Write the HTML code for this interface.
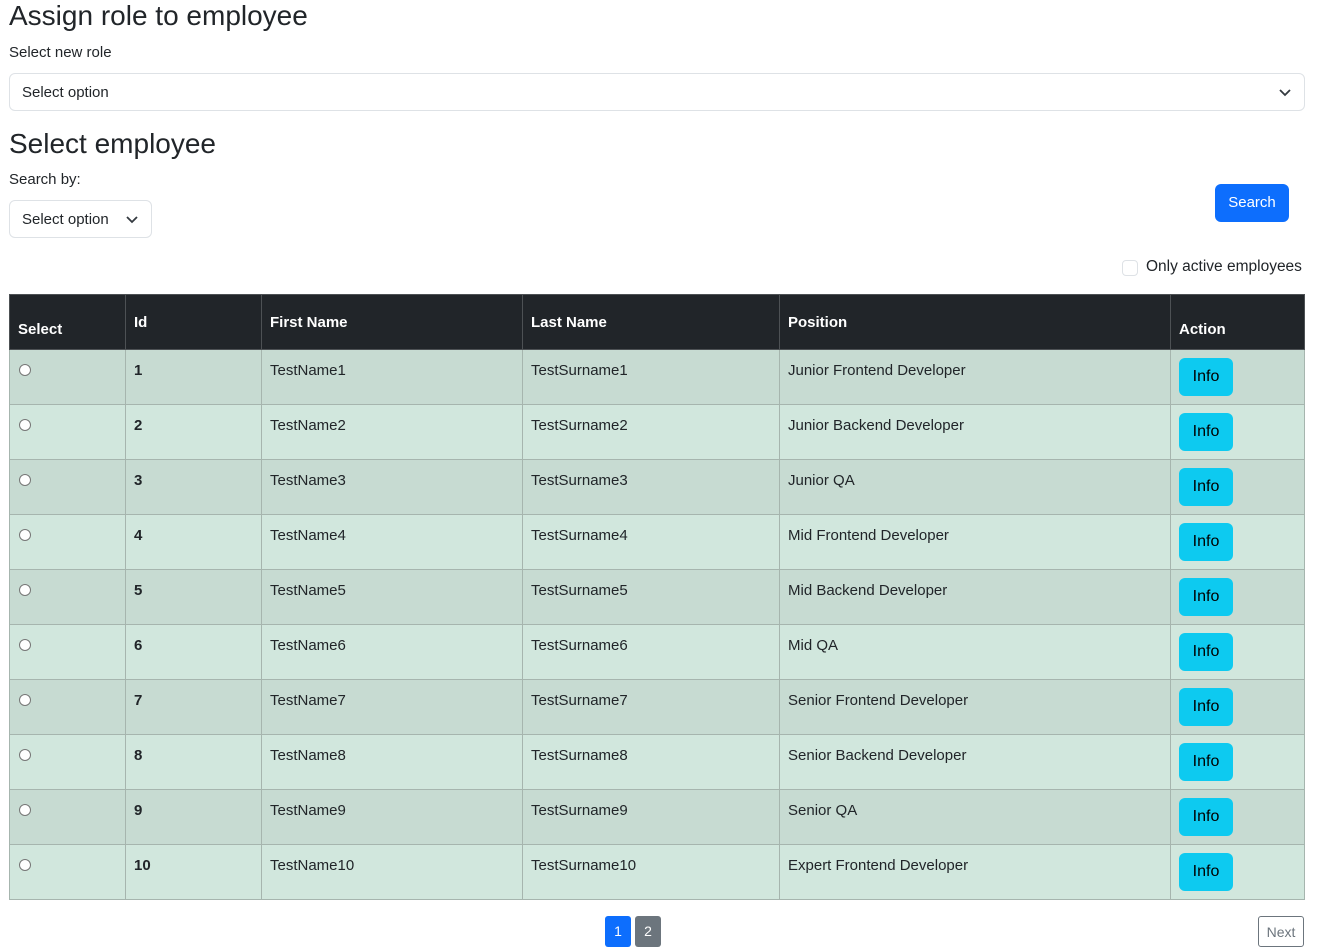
<!DOCTYPE html>
<html><head><style>
*{box-sizing:border-box;margin:0;padding:0}
body{width:1318px;height:951px;background:#fff;font-family:"Liberation Sans","DejaVu Sans",sans-serif;color:#212529;position:relative;overflow:hidden}
.a{position:absolute}
h1{font-weight:500;font-size:28px}
.sel{border:1px solid #dee2e6;border-radius:6px;font-size:15px;padding:0 12px;display:flex;align-items:center;justify-content:space-between}
table{position:absolute;left:9px;top:294px;width:1296px;border-collapse:collapse;font-size:15px;table-layout:fixed}
td,th{border:1px solid #a6b5ae;vertical-align:top;padding:12px 8px 0;text-align:left;overflow:hidden}
th{background:#212529;color:#fff;border-color:#4d5154;font-weight:bold;padding-top:19px}
tr{height:55px}
tbody tr:nth-child(odd) td{background:#c7dbd2}
tbody tr:nth-child(even) td{background:#d1e7dd}
.r{width:12px;height:12px;border:1px solid #777;border-radius:50%;background:#fff;display:inline-block;margin-left:1px;margin-top:2px}
.info{display:inline-block;background:#0dcaf0;color:#000;border-radius:6px;width:54px;height:38px;line-height:38px;text-align:center;margin-top:-4px;font-size:16px}
</style></head><body>
<h1 class="a" style="left:9px;top:0px">Assign role to employee</h1>
<div class="a" style="left:9px;top:44px;font-size:15px">Select new role</div>
<div class="a sel" style="left:9px;top:73px;width:1296px;height:38px"><span>Select option</span><svg width="14" height="14" viewBox="0 0 14 14"><path d="M2 5l5 5 5-5" fill="none" stroke="#343a40" stroke-width="1.8"/></svg></div>
<h1 class="a" style="left:9px;top:128px">Select employee</h1>
<div class="a" style="left:9px;top:171px;font-size:15px">Search by:</div>
<div class="a sel" style="left:9px;top:200px;width:143px;height:38px"><span>Select option</span><svg width="14" height="14" viewBox="0 0 14 14"><path d="M2 5l5 5 5-5" fill="none" stroke="#343a40" stroke-width="1.8"/></svg></div>
<div class="a" style="left:1215px;top:184px;width:74px;height:38px;background:#0d6efd;color:#fff;border-radius:6px;font-size:15px;line-height:38px;text-align:center">Search</div>
<div class="a" style="left:1122px;top:260px;width:16px;height:16px;border:1px solid #dee2e6;border-radius:4px"></div>
<div class="a" style="left:1146px;top:258px;font-size:15.5px">Only active employees</div>
<table>
<thead><tr><th style="width:116px;padding-top:26px">Select</th><th style="width:136px">Id</th><th style="width:261px">First Name</th><th style="width:257px">Last Name</th><th style="width:391px">Position</th><th style="padding-top:26px">Action</th></tr></thead>
<tbody>
<tr><td><span class="r"></span></td><td><b>1</b></td><td>TestName1</td><td>TestSurname1</td><td>Junior Frontend Developer</td><td><span class="info">Info</span></td></tr>
<tr><td><span class="r"></span></td><td><b>2</b></td><td>TestName2</td><td>TestSurname2</td><td>Junior Backend Developer</td><td><span class="info">Info</span></td></tr>
<tr><td><span class="r"></span></td><td><b>3</b></td><td>TestName3</td><td>TestSurname3</td><td>Junior QA</td><td><span class="info">Info</span></td></tr>
<tr><td><span class="r"></span></td><td><b>4</b></td><td>TestName4</td><td>TestSurname4</td><td>Mid Frontend Developer</td><td><span class="info">Info</span></td></tr>
<tr><td><span class="r"></span></td><td><b>5</b></td><td>TestName5</td><td>TestSurname5</td><td>Mid Backend Developer</td><td><span class="info">Info</span></td></tr>
<tr><td><span class="r"></span></td><td><b>6</b></td><td>TestName6</td><td>TestSurname6</td><td>Mid QA</td><td><span class="info">Info</span></td></tr>
<tr><td><span class="r"></span></td><td><b>7</b></td><td>TestName7</td><td>TestSurname7</td><td>Senior Frontend Developer</td><td><span class="info">Info</span></td></tr>
<tr><td><span class="r"></span></td><td><b>8</b></td><td>TestName8</td><td>TestSurname8</td><td>Senior Backend Developer</td><td><span class="info">Info</span></td></tr>
<tr><td><span class="r"></span></td><td><b>9</b></td><td>TestName9</td><td>TestSurname9</td><td>Senior QA</td><td><span class="info">Info</span></td></tr>
<tr><td><span class="r"></span></td><td><b>10</b></td><td>TestName10</td><td>TestSurname10</td><td>Expert Frontend Developer</td><td><span class="info">Info</span></td></tr>
</tbody>
</table>
<div class="a" style="left:605px;top:916px;width:26px;height:31px;background:#0d6efd;color:#fff;border-radius:3px;font-size:14px;line-height:31px;text-align:center">1</div>
<div class="a" style="left:635px;top:916px;width:26px;height:31px;background:#6c757d;color:#fff;border-radius:3px;font-size:14px;line-height:31px;text-align:center">2</div>
<div class="a" style="left:1258px;top:916px;width:46px;height:31px;border:1px solid #6c757d;color:#6c757d;border-radius:3px;font-size:14px;line-height:30px;text-align:center">Next</div>
</body></html>
